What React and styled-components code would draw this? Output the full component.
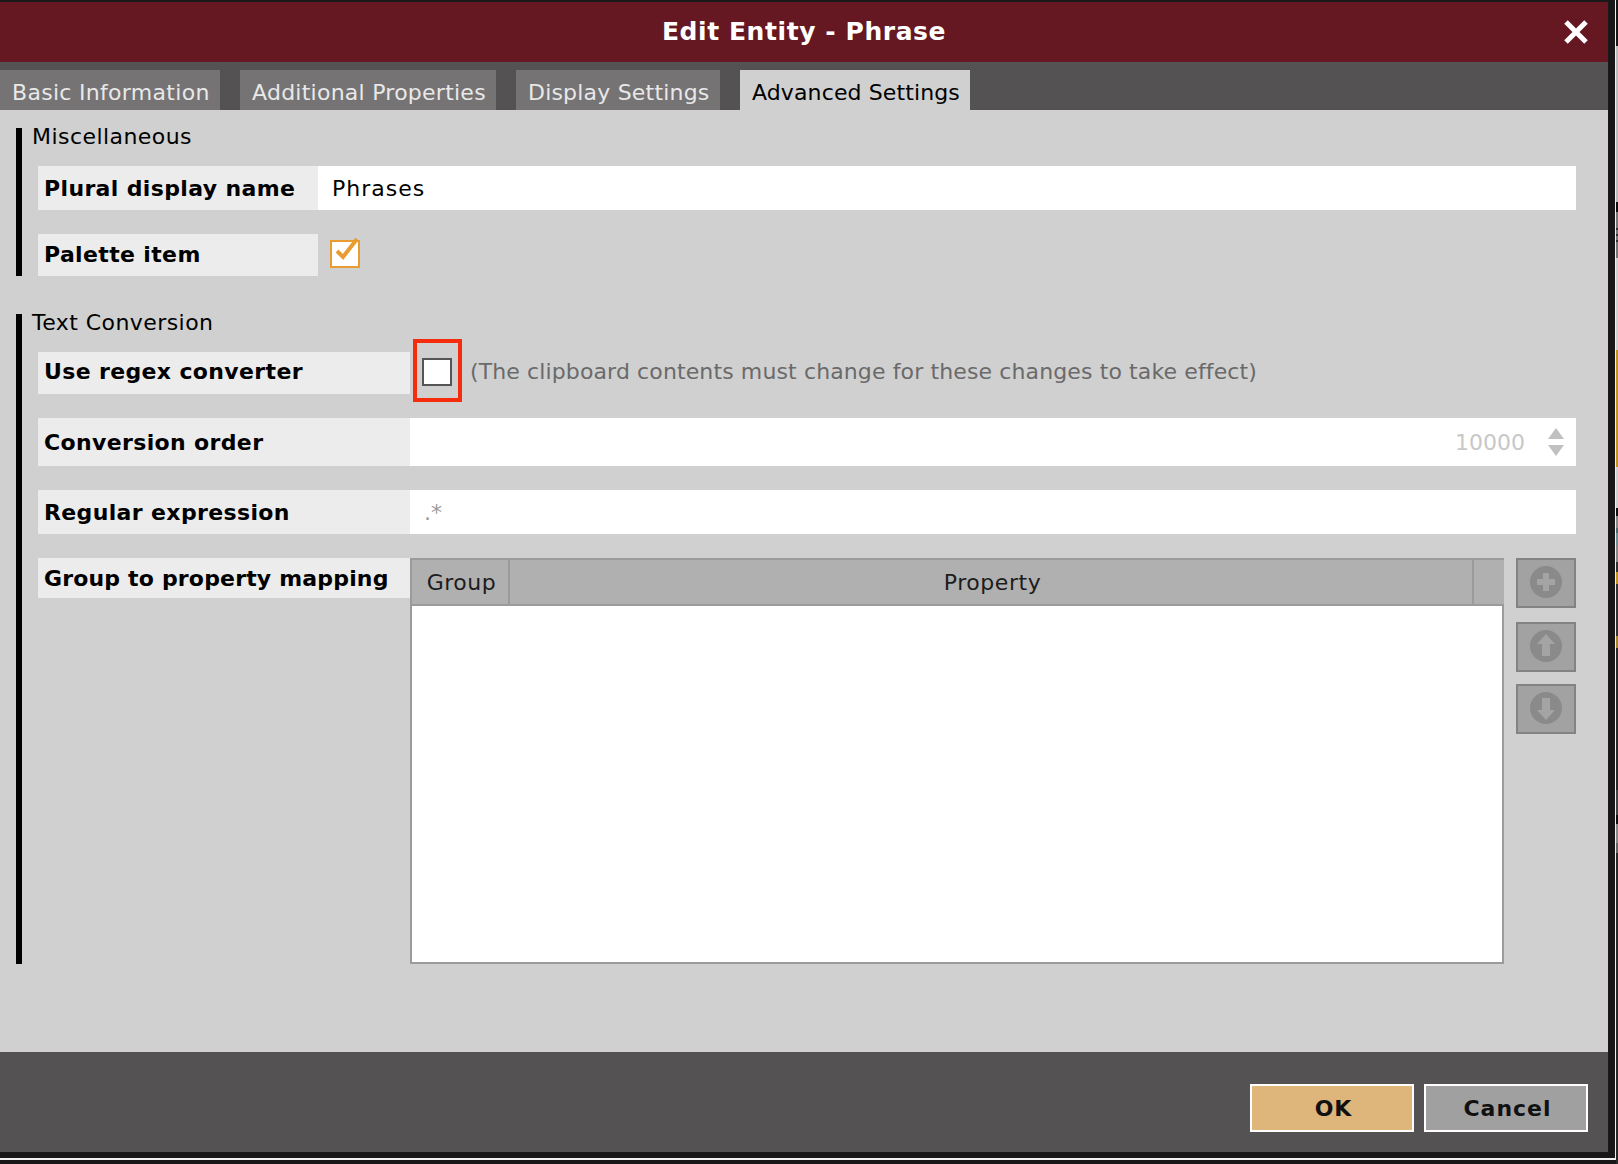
import React from "react"
import styled, { createGlobalStyle } from "styled-components"

const GlobalStyle = createGlobalStyle`
  html, body {
    margin: 0;
    padding: 0;
    background: #1a1718;
  }
  body {
    font-family: "DejaVu Sans", "Liberation Sans", sans-serif;
    font-size: 22px;
    color: #000;
  }
`

const Page = styled.div`
  width: 1618px;
  height: 1164px;
  overflow: hidden;
  display: flex;
  background: #1a1718;
`

const Frame = styled.div`
  width: 1616px;
  height: 1160px;
  box-sizing: border-box;
  border-right: 1px solid #f0f0f0;
  border-bottom: 2px solid #f0f0f0;
  display: flex;
  flex-direction: column;
`

const Dialog = styled.div`
  width: 1608px;
  height: 1150px;
  margin-top: 2px;
  display: flex;
  flex-direction: column;
`

const DesktopEdge = styled.div`
  width: 2px;
  display: flex;
  flex-direction: column;
`

const EdgeSegment = styled.div`
  background: ${(p) => p.$color};
  height: ${(p) => p.$h}px;
`

const TitleBar = styled.header`
  height: 60px;
  flex: none;
  box-sizing: border-box;
  padding-bottom: 2px;
  background: #651722;
  color: #fff;
  display: flex;
  align-items: center;
  justify-content: center;
  position: relative;
  font-size: 25px;
  font-weight: bold;
  letter-spacing: 0.57px;
`

const CloseIcon = styled.svg`
  position: absolute;
  right: 20px;
  top: 18px;
  width: 24px;
  height: 24px;
`

const TabStrip = styled.nav`
  height: 48px;
  flex: none;
  box-sizing: border-box;
  padding-top: 8px;
  display: flex;
  gap: 20px;
  background: #545253;
`

const Tab = styled.div`
  width: ${(p) => p.$w}px;
  height: 40px;
  box-sizing: border-box;
  padding: 5px 0 0 12px;
  display: flex;
  align-items: center;
  white-space: nowrap;
  letter-spacing: ${(p) => p.$ls}px;
  background: ${(p) => (p.$active ? "#d0d0d0" : "#757374")};
  color: ${(p) => (p.$active ? "#000" : "#e8e8e8")};
`

const Body = styled.main`
  flex: 1;
  box-sizing: border-box;
  padding: 18px 32px 0 16px;
  background: #d0d0d0;
  display: flex;
  flex-direction: column;
  gap: 38px;
`

const Section = styled.section`
  border-left: 6px solid #000;
  padding-left: 16px;
`

const SectionTitle = styled.div`
  height: 38px;
  margin-left: -6px;
  line-height: 18px;
  letter-spacing: 0.44px;
`

const Row = styled.div`
  display: flex;
  position: relative;
  align-items: ${(p) => (p.$top ? "flex-start" : "stretch")};
  height: ${(p) => p.$h}px;
  & + & {
    margin-top: 24px;
  }
`

const Label = styled.div`
  width: ${(p) => p.$w}px;
  height: ${(p) => (p.$h ? `${p.$h}px` : "auto")};
  flex: none;
  box-sizing: border-box;
  padding: 0 0 ${(p) => p.$lift || 0}px 6px;
  display: flex;
  align-items: center;
  background: #ececec;
  font-weight: bold;
  white-space: nowrap;
  letter-spacing: ${(p) => p.$ls || 0.36}px;
`

const Value = styled.div`
  flex: 1;
  box-sizing: border-box;
  padding: 0 14px;
  display: flex;
  align-items: center;
  background: #fff;
  letter-spacing: ${(p) => p.$ls || 0}px;
  color: ${(p) => p.$color || "#000"};
`

const NumberValue = styled(Value)`
  justify-content: flex-end;
  padding-right: 12px;
  gap: 23px;
`

const Spinner = styled.svg`
  width: 16px;
  height: 28px;
`

const CheckBox = styled.div`
  width: 30px;
  height: 28px;
  flex: none;
  box-sizing: border-box;
  margin: 6px 0 0 12px;
  border: 2px solid ${(p) => (p.$on ? "#e99c32" : "#555")};
  background: #fff;
  position: relative;
`

const CheckMark = styled.svg`
  position: absolute;
  left: 2px;
  top: -4px;
  width: 28px;
  height: 28px;
  overflow: visible;
`

const Highlight = styled.div`
  position: absolute;
  left: -11px;
  top: -21px;
  width: 49px;
  height: 63px;
  box-sizing: border-box;
  border: 4px solid #f52d0c;
`

const Hint = styled.div`
  margin-left: 18px;
  padding-bottom: 3px;
  display: flex;
  align-items: center;
  color: #6a6a6a;
  letter-spacing: 0.12px;
`

const Table = styled.div`
  width: 1094px;
  height: 406px;
  flex: none;
  box-sizing: border-box;
  border: 2px solid #9b9b9b;
  background: #fff;
`

const TableHead = styled.div`
  height: 46px;
  box-sizing: border-box;
  border-bottom: 2px solid #9b9b9b;
  margin-right: -2px;
  display: grid;
  grid-template-columns: 98px 964px 1fr;
  background: #b0b0b0;
`

const HeadCell = styled.div`
  display: flex;
  align-items: center;
  justify-content: center;
  padding-left: 3px;
  letter-spacing: 0.55px;
  color: #1c1c1c;
  &:not(:last-child) {
    border-right: 2px solid #9b9b9b;
  }
`

const SideButtons = styled.div`
  margin-left: 12px;
  display: flex;
  flex-direction: column;
`

const SideButton = styled.div`
  width: 60px;
  height: 50px;
  margin-bottom: ${(p) => p.$gap}px;
  box-sizing: border-box;
  border: 2px solid #838383;
  padding-bottom: 2px;
  background: #a2a2a2;
  display: flex;
  align-items: center;
  justify-content: center;
`

const Footer = styled.footer`
  height: 100px;
  flex: none;
  box-sizing: border-box;
  padding: 32px 20px 0 0;
  display: flex;
  justify-content: flex-end;
  align-items: flex-start;
  gap: 10px;
  background: #545253;
`

const Button = styled.div`
  width: 164px;
  height: 48px;
  box-sizing: border-box;
  border: 2px solid #fff;
  padding-left: 3px;
  background: ${(p) => (p.$primary ? "#deb67c" : "#a0a0a0")};
  display: flex;
  align-items: center;
  justify-content: center;
  font-weight: bold;
  letter-spacing: 1px;
  color: #111;
`

const edge = [
  ["#1a1718", 46],
  ["#bcbcbc", 156],
  ["#111", 10],
  ["#777", 16],
  ["#333", 2],
  ["#777", 4],
  ["#333", 2],
  ["#777", 4],
  ["#333", 2],
  ["#777", 16],
  ["#d0d0d0", 92],
  ["#c1941f", 117],
  ["#d0d0d0", 41],
  ["#111", 8],
  ["#888", 12],
  ["#4f6b70", 5],
  ["#6f8f95", 12],
  ["#888", 17],
  ["#333", 10],
  ["#c1941f", 12],
  ["#333", 52],
  ["#a5852a", 12],
  ["#2a2a2a", 142],
  ["#444", 25],
  ["#111", 9],
  ["#888", 19],
  ["#666", 10],
  ["#2a2a2a", 311],
]

const tabs = [
  { name: "Basic Information", w: 220, ls: 0.3 },
  { name: "Additional Properties", w: 256, ls: 0.25 },
  { name: "Display Settings", w: 204, ls: 0.2 },
  { name: "Advanced Settings", w: 230, ls: 0.12 },
]

const icons = {
  plus: "M-9 -3H-3V-9H3V-3H9V3H3V9H-3V3H-9Z",
  up: "M0 -12L9 -2H4V10H-4V-2H-9Z",
  down: "M0 12L9 2H4V-10H-4V2H-9Z",
}

const CircleIcon = ({ name }) => (
  <svg width="32" height="32" viewBox="-16 -16 32 32">
    <circle r="16" fill="#8a8a8a" />
    <path d={icons[name]} fill="#a4a4a4" />
  </svg>
)

const App = () => {
  return (
    <Page>
      <GlobalStyle />
      <Frame>
        <Dialog>
          <TitleBar>
            Edit Entity - Phrase
            <CloseIcon viewBox="0 0 24 24">
              <path d="M2 2L22 22M22 2L2 22" stroke="#fff" strokeWidth="5" />
            </CloseIcon>
          </TitleBar>
          <TabStrip>
            {tabs.map((tab, index) => (
              <Tab key={tab.name} $w={tab.w} $ls={tab.ls} $active={index === 3}>
                {tab.name}
              </Tab>
            ))}
          </TabStrip>
          <Body>
            <Section>
              <SectionTitle>Miscellaneous</SectionTitle>
              <Row $h={44}>
                <Label $w={280}>Plural display name</Label>
                <Value $ls={1}>Phrases</Value>
              </Row>
              <Row $h={42}>
                <Label $w={280} $lift={2}>
                  Palette item
                </Label>
                <CheckBox $on>
                  <CheckMark viewBox="0 0 28 28">
                    <path d="M3 13L9 19L23 1" fill="none" stroke="#e99c32" strokeWidth="4" />
                  </CheckMark>
                </CheckBox>
              </Row>
            </Section>
            <Section>
              <SectionTitle>Text Conversion</SectionTitle>
              <Row $h={42}>
                <Label $w={372} $lift={3}>
                  Use regex converter
                </Label>
                <CheckBox>
                  <Highlight />
                </CheckBox>
                <Hint>(The clipboard contents must change for these changes to take effect)</Hint>
              </Row>
              <Row $h={48}>
                <Label $w={372}>Conversion order</Label>
                <NumberValue $color="#c8c8c8">
                  10000
                  <Spinner viewBox="0 0 16 28">
                    <path d="M8 0L16 11H0ZM0 17H16L8 28Z" fill="#c0c0c0" />
                  </Spinner>
                </NumberValue>
              </Row>
              <Row $h={44}>
                <Label $w={372}>Regular expression</Label>
                <Value $color="#999">.*</Value>
              </Row>
              <Row $h={406} $top>
                <Label $w={372} $h={40} $ls={0.17}>
                  Group to property mapping
                </Label>
                <Table>
                  <TableHead>
                    <HeadCell>Group</HeadCell>
                    <HeadCell>Property</HeadCell>
                    <HeadCell />
                  </TableHead>
                </Table>
                <SideButtons>
                  <SideButton $gap={14}>
                    <CircleIcon name="plus" />
                  </SideButton>
                  <SideButton $gap={12}>
                    <CircleIcon name="up" />
                  </SideButton>
                  <SideButton $gap={0}>
                    <CircleIcon name="down" />
                  </SideButton>
                </SideButtons>
              </Row>
            </Section>
          </Body>
          <Footer>
            <Button $primary>OK</Button>
            <Button>Cancel</Button>
          </Footer>
        </Dialog>
      </Frame>
      <DesktopEdge>
        {edge.map(([color, h], index) => (
          <EdgeSegment key={index} $color={color} $h={h} />
        ))}
      </DesktopEdge>
    </Page>
  )
}

export default App
